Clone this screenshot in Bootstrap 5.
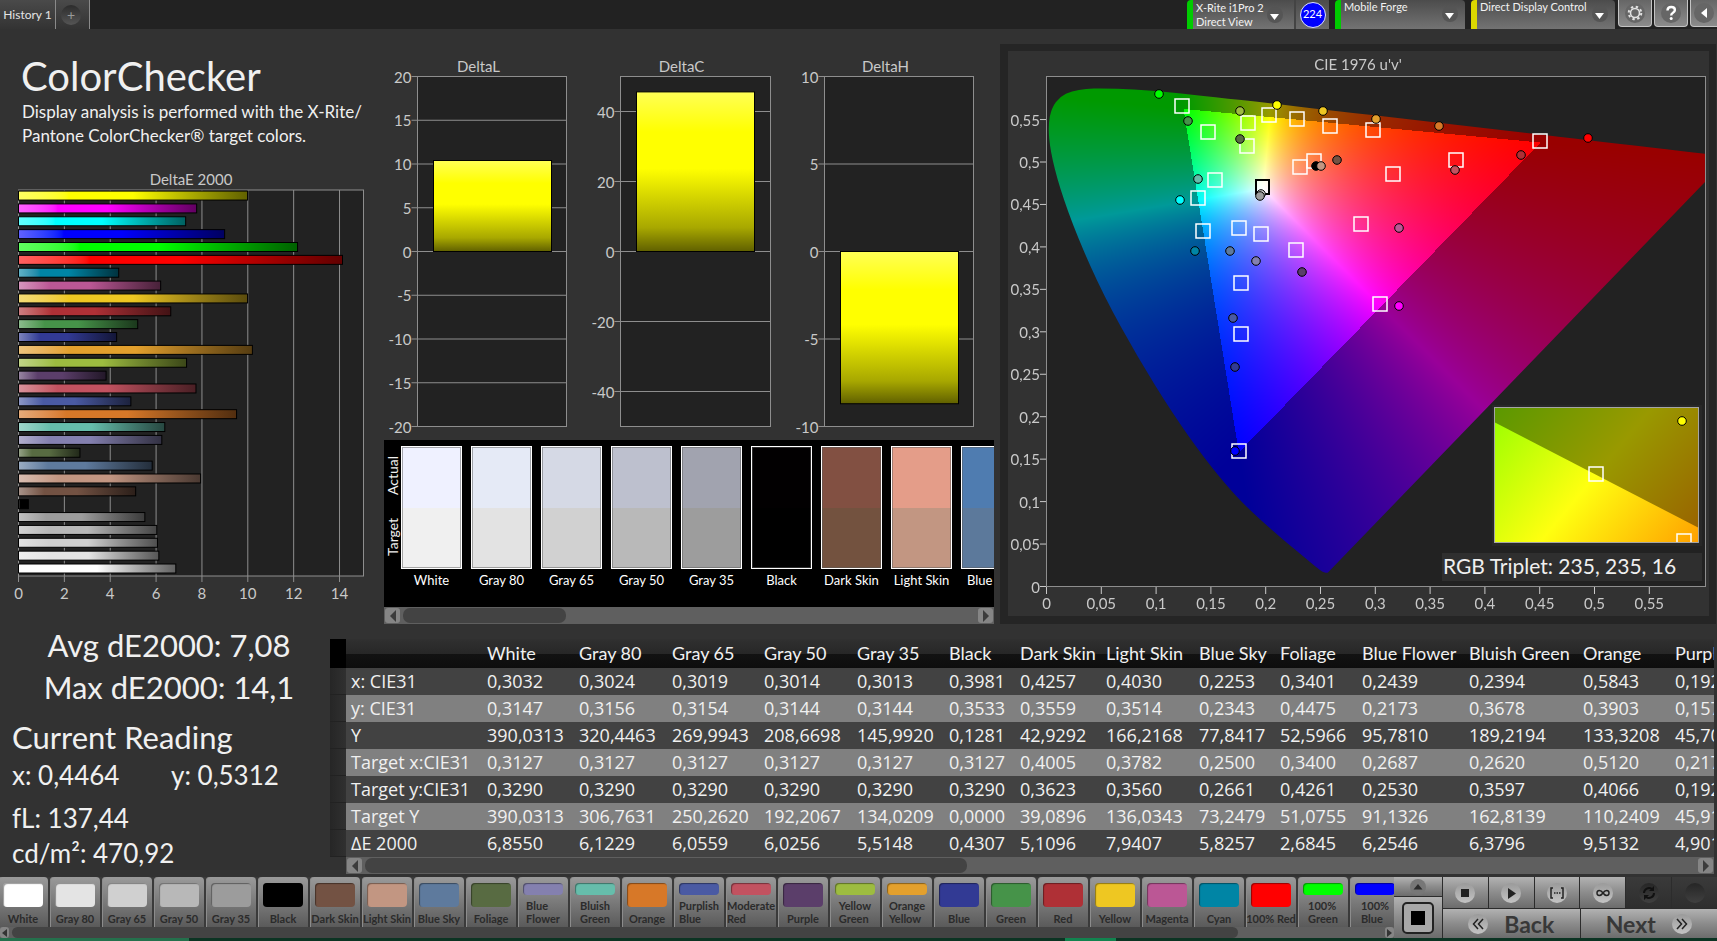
<!DOCTYPE html>
<html lang="en">
<head>
<meta charset="utf-8">
<meta name="viewport" content="width=device-width, initial-scale=1">
<title>ColorChecker</title>
<link href="https://cdn.jsdelivr.net/npm/bootstrap@5.3.0/dist/css/bootstrap.min.css" rel="stylesheet">
<style>
  body { background:#323232; color:#f0f0f0; font-family:Lato,"Open Sans",sans-serif; overflow-x:hidden; }
  button { font-family:inherit; }
  svg { display:block; }

  /* top bar */
  .topbar { height:29px; background:#222; overflow:hidden; }
  .tab-btn { border:0; border-right:1px solid #8a8a8a; background:linear-gradient(#4a4a4a,#333); color:#e4e4e4; font-size:12px; height:29px; }
  .tab-hist { width:56px; }
  .tab-add { width:34px; }
  .add-dot { width:20px; height:20px; border-radius:50%; background:linear-gradient(#2c2c2c,#555); color:#999; line-height:20px; font-size:14px; margin-left:5px; display:block; }
  .devices { gap:6px; }
  .dev { border:0; border-left:6px solid #0c0; height:29px; background:linear-gradient(#4c4c4c,#737373); color:#f2f2f2; font-size:11px; line-height:14px; text-align:left; white-space:nowrap; }
  .dev-yellow { border-left-color:#dcd800; }
  .dev-a { width:107px; border-radius:4px 0 0 0; padding:0 0 0 3px; }
  .dev-b { width:130px; border-radius:4px 4px 0 0; padding:0 0 0 3px; }
  .dev-c { width:144px; border-radius:4px 4px 0 0; padding:0 0 0 3px; }
  .dev-count { width:35px; height:29px; background:linear-gradient(#4c4c4c,#6c6c6c); border-left:2px solid #444; }
  .count-dot { width:26px; height:26px; border-radius:50%; background:#00f; border:1px solid #dfe3ff; color:#fff; font-size:11px; }
  .tools { gap:2px; margin:0 -7px 0 -3px; }
  .tool-btn { width:34px; height:27px; border:1px solid #c4c4c4; border-top:0; border-radius:0 0 4px 4px; background:linear-gradient(#666,#8c8c8c); }

  /* upper area */
  .board { display:grid; grid-template-columns:380fr 620fr 717fr; padding-top:15px; }
  .board > * { min-width:0; }
  .intro-block { padding:8px 0 0 22px; }
  .page-title { font-size:40px; line-height:48px; font-weight:400; margin-left:-1px; }
  .intro { font-size:17px; line-height:24px; }
  .chart-text text { font-size:15px; fill:#c9c9c9; }
  .chart-text .readout { font-size:21px; fill:#f0f0f0; }
  .stack { display:grid; }
  .stack > * { grid-area:1/1; width:100%; }
  .swatch-panel { margin:0 6px 0 4px; }
  .swatches { background:#000; height:167px; overflow:hidden; }
  .swatch-row { gap:9px; padding-top:6px; }
  .side-label { width:17px; font-size:14px; }
  .side-label span { writing-mode:vertical-rl; transform:rotate(180deg); height:62px; line-height:17px; text-align:center; }
  .swatch { flex:0 0 61px; }
  .swatch-chip { height:123px; border:1px solid #fff; outline:1px solid rgba(90,90,90,.5); outline-offset:-2px; }
  .swatch-name { font-size:13px; line-height:22px; text-align:center; white-space:nowrap; margin:0 -4px; color:#fff; }

  /* scroll bars */
  .sbar { height:17px; background:#5f5f5f; display:flex; align-items:center; padding:0 1px; }
  .sbar button { width:15px; height:15px; border:0; border-radius:3px; background:#858585; padding:0; display:grid; place-items:center; flex:none; }
  .sbar .track { flex:1; height:15px; margin:0 3px; }
  .sbar .thumb { height:15px; border-radius:7px; background:#434343; }
  .sbar-slim { height:11px; padding:0; }
  .sbar-slim button { width:9px; height:11px; }
  .sbar-slim .track, .sbar-slim .thumb { height:11px; }

  /* readings and table */
  .stats { flex:0 0 330px; padding-left:12px; }
  .stat-xl { font-size:31px; line-height:42px; }
  .stat-lg { font-size:26px; line-height:35px; }
  .stat-mid { padding-right:4px; }
  .readings { padding:15px 3px 0 0; }
  .data-wrap { overflow:hidden; }
  .data { table-layout:fixed; width:1500px; border-collapse:collapse; font-family:"Open Sans","Noto Sans",sans-serif; }
  .data th, .data td { padding:0 5px; height:27px; line-height:27px; font-size:18px; font-weight:400; white-space:nowrap; }
  .data thead th { height:29px; line-height:29px; font-family:Lato,sans-serif; background:linear-gradient(#303030,#272727 50%,#121212 52%,#0d0d0d); }
  .data thead th:first-child { background:#000; }
  .data tbody tr { background:#424242; }
  .data tbody tr:nth-child(even) { background:#808080; }
  .data tbody td:first-child { background:linear-gradient(90deg,#262626,#303030); box-shadow:inset 0 -1px #222; }

  /* bottom bar */
  .patches { overflow:hidden; background:#3a3a3a; height:50px; gap:2px; margin-left:-2px; }
  .patch { flex:0 0 50px; height:50px; border:0; border-radius:4px 4px 0 0; padding:6px 0 2px; background:linear-gradient(#9a9a9a,#5a5a5a); color:#2b2b2b; font-size:11px; line-height:13px; font-weight:700; box-shadow:1px 0 #8c8c8c inset; display:flex; flex-direction:column; align-items:center; justify-content:space-between; white-space:nowrap; text-align:left; }
  .patch i { display:block; width:40px; height:24px; border-radius:4px; box-shadow:inset 1px 1px 1px rgba(0,0,0,.4); }
  .patch.two i { height:12px; flex:none; }
  .ctl { flex:0 0 323px; background:#2c2c2c; gap:1px; }
  .ctl button { border:0; padding:0; background:linear-gradient(#b2b2b2,#8c8c8c 50%,#6c6c6c); color:#2e2e2e; }
  .ctl button.off { background:linear-gradient(#3a3a3a,#2e2e2e); }
  .ctl-side { flex:0 0 48px; }
  .ctl-up { height:19px; }
  .ctl-stop { height:41px; }
  .ctl-row { height:31px; flex:1; }
  .ctl-line { gap:1px; }
  .ctl .ctl-nav { height:29px; font-size:23px; line-height:28px; font-weight:700; flex:1; }
  .ctl .ctl-nav { color:#383838; }
  .disc { width:20px; height:20px; border-radius:50%; background:linear-gradient(#9a9a9a,#c4c4c4); display:grid; place-items:center; }
  .off .disc { background:linear-gradient(#262626,#404040); }
  .strip { height:3px; background:linear-gradient(90deg,#24704c 11%,#0c3423 11% 62%,#12834f 62% 65%,#0c3423 65%); }
</style>
<script src="https://cdn.jsdelivr.net/npm/bootstrap@5.3.0/dist/js/bootstrap.bundle.min.js"></script>
</head>
<body class="d-flex flex-column min-vh-100">

<header class="topbar d-flex align-items-start">
  <button type="button" class="tab-btn tab-hist p-0 text-nowrap">History 1</button>
  <button type="button" class="tab-btn tab-add p-0" aria-label="Add tab"><span class="add-dot">+</span></button>
  <div class="devices d-flex ms-auto">
    <div class="d-flex">
      <button type="button" class="dev dev-a d-flex align-items-center justify-content-between" aria-haspopup="true"><span>X-Rite i1Pro 2<br>Direct View</span><svg width="28" height="28" viewBox="0 0 28 28"><circle cx="9" cy="14" r="8" fill="#555"/><path d="M4 13h9l-4.500 6z" fill="#fff"/></svg></button>
      <div class="dev-count d-flex align-items-center justify-content-center"><span class="count-dot d-flex align-items-center justify-content-center">224</span></div>
    </div>
    <button type="button" class="dev dev-b d-flex align-items-start justify-content-between" aria-haspopup="true"><span>Mobile Forge</span><svg width="28" height="28" viewBox="0 0 28 28"><circle cx="13" cy="14" r="8" fill="#555"/><path d="M8 13h9l-4.500 6z" fill="#fff"/></svg></button>
    <button type="button" class="dev dev-c dev-yellow d-flex align-items-start justify-content-between" aria-haspopup="true"><span>Direct Display Control</span><svg width="24" height="28" viewBox="0 0 24 28"><circle cx="9" cy="14" r="8" fill="#555"/><path d="M4 13h9l-4.500 6z" fill="#fff"/></svg></button>
    <div class="tools d-flex">
      <button type="button" class="tool-btn p-0" aria-label="Settings"><svg width="32" height="26" viewBox="0 0 32 26"><circle cx="16" cy="13" r="10" fill="#666"/><circle cx="16" cy="13" r="4.500" fill="none" stroke="#e2e2e2" stroke-width="1.600"/><circle cx="16" cy="13" r="6.300" fill="none" stroke="#e2e2e2" stroke-width="2" stroke-dasharray="2.400 2.548"/></svg></button>
      <button type="button" class="tool-btn p-0" aria-label="Help"><svg width="32" height="26" viewBox="0 0 32 26"><circle cx="16" cy="13" r="10" fill="#666"/><path d="M12.500 10.500q0-3.500 3.700-3.500t3.700 3q0 1.600-1.900 2.700T16.200 15.500" fill="none" stroke="#fff" stroke-width="2.400"/><circle cx="16.200" cy="18.500" r="1.500" fill="#fff"/></svg></button>
      <button type="button" class="tool-btn p-0" aria-label="Collapse"><svg width="32" height="26" viewBox="0 0 32 26"><circle cx="13" cy="13" r="10" fill="#666"/><path d="M16 8v10l-6-5z" fill="#fff"/></svg></button>
    </div>
  </div>
</header>

<main class="board">
  <section>
    <div class="intro-block">
      <h1 class="page-title mb-0">ColorChecker</h1>
      <p class="intro mb-0 text-nowrap">Display analysis is performed with the X-Rite/<br>Pantone ColorChecker® target colors.</p>
    </div>
    <svg id="deltaE" class="chart-text w-100" viewBox="0 148 380 460" role="img" aria-label="DeltaE 2000 bar chart"></svg>
  </section>

  <section>
    <svg id="deltas" class="chart-text w-100" viewBox="380 44 620 396" role="img" aria-label="DeltaL, DeltaC and DeltaH"></svg>
    <div class="swatch-panel">
      <div class="swatches d-flex">
        <div class="side-label d-flex flex-column pt-1 flex-shrink-0"><span>Actual</span><span>Target</span></div>
        <div class="swatch-row d-flex overflow-hidden flex-grow-1" id="swatches"></div>
      </div>
      <div class="sbar"><button type="button" aria-label="Scroll left"><svg width="6" height="12"><path d="M6 0v12L0 6z" fill="#3b3b3b"/></svg></button><div class="track"><div class="thumb" style="width:28.500%"></div></div><button type="button" aria-label="Scroll right"><svg width="6" height="12"><path d="M0 0v12l6-6z" fill="#3b3b3b"/></svg></button></div>
    </div>
  </section>

  <section class="stack">
    <svg id="cieBase" viewBox="0 44 717 580"><rect y="44" width="716" height="580" fill="#252525"/><rect x="8" y="51" width="701" height="565" fill="#323232"/><rect x="46" y="76" width="660" height="511" fill="#222"/></svg>
    <canvas id="cieFill" width="717" height="580"></canvas>
    <svg id="cie" class="chart-text" viewBox="0 44 717 580" role="img" aria-label="CIE 1976 chromaticity diagram"></svg>
  </section>
</main>

<section class="d-flex">
  <div class="stats">
    <div class="stat-xl stat-mid text-center">Avg dE2000: 7,08</div>
    <div class="stat-xl stat-mid text-center">Max dE2000: 14,1</div>
    <div class="stat-xl pt-2">Current Reading</div>
    <div class="stat-lg row g-0 pb-2"><span class="col-6">x: 0,4464</span><span class="col-6">y: 0,5312</span></div>
    <div class="stat-lg">fL: 137,44</div>
    <div class="stat-lg">cd/m²: 470,92</div>
  </div>
  <div class="readings flex-grow-1 overflow-hidden">
    <div class="data-wrap"><table class="data" id="data"></table></div>
    <div class="sbar ms-3"><button type="button" aria-label="Scroll left"><svg width="6" height="12"><path d="M6 0v12L0 6z" fill="#3b3b3b"/></svg></button><div class="track"><div class="thumb" style="width:45.300%"></div></div><button type="button" aria-label="Scroll right"><svg width="6" height="12"><path d="M0 0v12l6-6z" fill="#3b3b3b"/></svg></button></div>
  </div>
</section>

<footer class="mt-auto">
  <div class="d-flex">
    <div class="flex-grow-1 overflow-hidden">
      <div class="patches d-flex" id="patches"></div>
      <div class="sbar sbar-slim"><button type="button" aria-label="Scroll left"><svg width="5" height="8"><path d="M5 0v8L0 4z" fill="#333"/></svg></button><div class="track"><div class="thumb" style="width:89.500%"></div></div><button type="button" aria-label="Scroll right"><svg width="5" height="8"><path d="M0 0v8l5-4z" fill="#333"/></svg></button></div>
    </div>
    <div class="ctl d-flex">
      <div class="ctl-side d-flex flex-column">
        <button type="button" class="ctl-up mb-auto" aria-label="Expand"><svg width="16" height="16" class="mx-auto"><circle cx="8" cy="8" r="8" fill="#777"/><path d="M3.500 10.500h9L8 5z" fill="#2b2b2b"/></svg></button>
        <button type="button" class="ctl-stop" aria-label="Stop window"><svg width="34" height="34" class="mx-auto"><rect x="2" y="2" width="30" height="30" rx="4" fill="#a8a8a8" stroke="#222" stroke-width="2"/><rect x="10" y="10" width="14" height="14" fill="#000"/></svg></button>
      </div>
      <div class="flex-grow-1 d-flex flex-column">
        <div class="ctl-line d-flex mb-auto" id="transport"></div>
        <div class="ctl-line d-flex">
          <button type="button" class="ctl-nav d-flex align-items-center justify-content-center gap-3"><span class="disc"><svg width="12" height="12"><path d="M6 1L1.500 6 6 11M11 1L6.500 6 11 11" fill="none" stroke="#222" stroke-width="1.500"/></svg></span>Back</button>
          <button type="button" class="ctl-nav d-flex align-items-center justify-content-center gap-3">Next<span class="disc"><svg width="12" height="12"><path d="M1 1l4.500 5L1 11M6 1l4.500 5L6 11" fill="none" stroke="#222" stroke-width="1.500"/></svg></span></button>
        </div>
      </div>
    </div>
  </div>
  <div class="strip"></div>
</footer>

<script>
const $ = id => document.getElementById(id);
const line = (x1,y1,x2,y2,c='#8e8e8e') => `<path d="M${x1} ${y1}L${x2} ${y2}" stroke="${c}"/>`;
const label = (x,y,t,a='middle',cls='') => `<text x="${x}" y="${y}" text-anchor="${a}" class="${cls}">${t}</text>`;
const comma = v => String(+v.toFixed(2)).replace('.', ',');

/* patches: name, target colour */
const patches = [['White','#fff'],['Gray 80','#e4e4e4'],['Gray 65','#d0d0d0'],['Gray 50','#b8b8b8'],['Gray 35','#9c9c9c'],['Black','#000'],
 ['Dark Skin','#735243'],['Light Skin','#c29682'],['Blue Sky','#5e7a9d'],['Foliage','#586b42'],['Blue<br>Flower','#8480af'],['Bluish<br>Green','#66bdab'],
 ['Orange','#d77828'],['Purplish<br>Blue','#4a5aa3'],['Moderate<br>Red','#c25260'],['Purple','#5b3e6a'],['Yellow<br>Green','#9dbc40'],['Orange<br>Yellow','#e3a02d'],
 ['Blue','#323a94'],['Green','#469349'],['Red','#af3036'],['Yellow','#eec722'],['Magenta','#bb5795'],['Cyan','#0085a5'],
 ['100% Red','#f00'],['100%<br>Green','#0f0'],['100%<br>Blue','#00f'],['100%<br>Cyan','#0ff'],['100%<br>Magenta','#f0f'],['100%<br>Yellow','#ff0']];
$('patches').innerHTML = patches.slice(0,27).map(([n,c]) =>
  `<button type="button" class="patch ${n.includes('<br>')?'two':''}"><i style="background:${c}"></i><span>${n}</span></button>`).join('');

/* DeltaE 2000 */
(() => {
  const v = [6.86,6.12,6.06,6.03,5.51,.43,5.11,7.94,5.83,2.68,6.25,6.38,9.51,4.9,7.74,3.82,7.33,10.2,4.28,5.2,6.64,9.99,6.2,4.37,14.13,12.17,8.99,7.29,7.77,9.99];
  const X = n => 18.5 + n*22.93;
  let s = `<rect x="18.5" y="190" width="345" height="386" fill="#222" stroke="#8e8e8e"/>`, d = '';
  for (let n=0;n<=14;n+=2) s += line(X(n),190,X(n),582) + label(X(n),599,n);
  v.forEach((n,i) => {
    const c = patches[i][1], y = 568.5 - i*12.86;
    d += `<linearGradient id="g${i}"><stop stop-color="color-mix(in srgb, ${c} 62%, #fff)"/><stop offset=".22" stop-color="${c}"/><stop offset=".5" stop-color="${c}"/><stop offset="1" stop-color="color-mix(in srgb, ${c} 38%, #000)"/></linearGradient>`;
    s += `<rect x="18.5" y="${y-4.5}" width="${n*22.93}" height="9" fill="url(#g${i})" stroke="#000"/>`;
  });
  $('deltaE').innerHTML = `<defs>${d}</defs>` + s + label(191,185,'DeltaE 2000');
})();

/* DeltaL / DeltaC / DeltaH */
(() => {
  let s = `<defs><linearGradient id="gy" x2="0" y2="1"><stop stop-color="#ffff55"/><stop offset=".25" stop-color="#ff0"/><stop offset=".48" stop-color="#ff0"/><stop offset=".85" stop-color="#a8a800"/><stop offset="1" stop-color="#606000"/></linearGradient></defs>`;
  [['DeltaL',417.5,149,20,5,10.4],['DeltaC',620.5,150,50,20,45.6],['DeltaH',824.5,149,10,5,-8.7]].forEach(([t,x,w,max,step,val]) => {
    const k = 175/max, Y = v => 251.5 - v*k, top = Math.floor(max/step)*step;
    s += `<rect x="${x}" y="76.5" width="${w}" height="350" fill="#222" stroke="#8e8e8e"/>` + label(x+61,72,t);
    for (let v=-top; v<=top; v+=step) s += line(x-6,Y(v),x+w,Y(v)) + label(x-6,Y(v)+6,v,'end');
    s += `<rect x="${x+16}" y="${Math.min(Y(0),Y(val))}" width="118" height="${Math.abs(val)*k}" fill="url(#gy)" stroke="#000"/>`;
  });
  $('deltas').innerHTML = s;
})();

/* actual / target swatches */
$('swatches').innerHTML = [['White','#eff1ff','#f0f0f0'],['Gray 80','#e5eaf6','#e3e3e3'],['Gray 65','#d5d9e5','#d1d1d1'],['Gray 50','#bdc0ce','#b9b9b9'],['Gray 35','#a1a3af','#9d9d9d'],['Black','#020001','#000'],['Dark Skin','#825042','#73523f'],['Light Skin','#e49d89','#c29682'],['Blue Sky','#4f7cb0','#5c799b']]
  .map(([n,a,t]) => `<div class="swatch"><div class="swatch-chip" style="background:linear-gradient(${a} 50%,${t} 50%)"></div><div class="swatch-name">${n}</div></div>`).join('');

/* CIE 1976 u'v' */
(() => {
  const X = u => 46.5 + u*1096, Y = v => 586.5 - v*849;
  const xy = [.1741,.005,.1733,.0048,.1714,.0051,.1689,.0069,.1644,.0109,.1566,.0177,.144,.0297,.1355,.0399,.1241,.0578,.1096,.0868,.0913,.1327,.0687,.2007,.0454,.295,.0235,.4127,.0082,.5384,.0039,.6548,.0139,.7502,.0389,.812,.0743,.8338,.1142,.8262,.1547,.8059,.2296,.7543,.3016,.6923,.3731,.6245,.4441,.5547,.5125,.4866,.5752,.4242,.627,.3725,.6658,.334,.6915,.3083,.719,.2809,.7347,.2653];
  const W = 717, H = 580, off = document.createElement('canvas'); off.width = W; off.height = H;
  const oc = off.getContext('2d'), im = oc.createImageData(W,H);
  for (let j=0;j<H;j++) for (let i=0;i<W;i++) {
    const u = (i+.5-46.5)/1096, v = (586.5-(j+44.5))/849;
    if (v <= .001) continue;
    const x = 9*u/(6*u-16*v+12), y = 4*v/(6*u-16*v+12), x1 = x/y, z1 = (1-x-y)/y;
    const c = [3.2406*x1-1.5372-.4986*z1, -.9689*x1+1.8758+.0415*z1, .0557*x1-.204+1.057*z1];
    const m = Math.max(...c), k = Math.min(...c) < 0 ? 153 : 255, p = (j*W+i)*4;
    c.forEach((q,n) => im.data[p+n] = k*Math.max(0,q/m));
    im.data[p+3] = 255;
  }
  oc.putImageData(im,0,0);
  const cx = $('cieFill').getContext('2d');
  cx.beginPath(); cx.rect(47,33,658,509); cx.clip();
  cx.beginPath();
  const pts = [];
  for (let n=0;n<xy.length;n+=2) { const d = -2*xy[n]+12*xy[n+1]+3; pts.push([X(4*xy[n]/d), Y(9*xy[n+1]/d)-44]); }
  cx.moveTo(...pts[0]);
  for (let n=1;n<pts.length-1;n++) cx.quadraticCurveTo(...pts[n],(pts[n][0]+pts[n+1][0])/2,(pts[n][1]+pts[n+1][1])/2);
  cx.lineTo(...pts[pts.length-1]); cx.closePath(); cx.clip();
  cx.drawImage(off,0,0);

  let s = `<rect x="46.5" y="76.5" width="659" height="510" fill="none" stroke="#8e8e8e"/>` + label(358,70,"CIE 1976 u'v'");
  for (let n=0;n<12;n++) {
    const v = n*.05;
    s += line(X(v),587,X(v),594,'#c9c9c9') + label(X(v),609,comma(v)) + line(40,Y(v),46,Y(v),'#c9c9c9') + label(40,Y(v)+6,comma(v),'end');
  }
  const sq = (x,y,c='#fff') => `<rect x="${x-7}" y="${y-7}" width="14" height="14" fill="none" stroke="${c}" stroke-width="1.500"/>`;
  const dot = (x,y,c) => `<circle cx="${x}" cy="${y}" r="4.300" fill="${c}" stroke="#000"/>`;
  [[182,106],[208,132],[248,123],[269,115],[297,119],[330,126],[373,130],[247,146],[540,141],[456,160],[393,174],[314,161],[300,167],[361,224],[215,180],[198,198],[203,231],[239,228],[261,234],[296,250],[241,283],[380,304],[241,334],[239,451]].forEach(p => s += sq(...p));
  s += `<rect x="256" y="180" width="13" height="14" fill="#fff" fill-opacity=".6" stroke="#000" stroke-width="2"/>`;
  [[159,94,'#0f0'],[188,121,'#469349'],[240,111,'#9dbc40'],[240,139,'#586b42'],[277,105,'#ff0'],[323,111,'#eec722'],[376,119,'#e3a02d'],[439,126,'#d77828'],[588,138,'#f00'],[521,155,'#af3036'],[455,170,'#c25260'],[337,160,'#735243'],[316,166,'#000'],[321,166,'#c29682'],[198,179,'#66bdab'],[180,200,'#0ff'],[195,251,'#0085a5'],[230,251,'#5e7a9d'],[256,261,'#8480af'],[302,272,'#5b3e6a'],[399,228,'#bb5795'],[399,306,'#f0f'],[233,318,'#4a5aa3'],[235,367,'#323a94'],[235,451,'#00f'],[261,194,'#ccc'],[260,196,'#9c9c9c']].forEach(p => s += dot(...p));
  /* magnified view of the selected patch */
  const st = (a,b,c) => `<stop stop-color="${a}"/><stop offset=".5" stop-color="${b}"/><stop offset="1" stop-color="${c}"/>`;
  const gv = 'gradientUnits="userSpaceOnUse" x1="494" y1="407" x2="681" y2="563"';
  s += `<defs><linearGradient id="zi" ${gv}>${st('#96ff00','#ffff10','#ffa000')}</linearGradient><linearGradient id="zo" ${gv}>${st('#5a9900','#999900','#996000')}</linearGradient><clipPath id="zc"><rect x="494" y="407" width="205" height="136"/></clipPath></defs>
   <rect x="492" y="405" width="210" height="141" fill="#282828"/><g clip-path="url(#zc)"><rect x="494" y="407" width="205" height="136" fill="url(#zo)"/><path d="M494 422L699 528V543H494z" fill="url(#zi)"/>${sq(596,474)}${sq(684,541)}${dot(682,421,'#ff0')}</g>
   <rect x="494.5" y="407.5" width="204" height="135" fill="none" stroke="#a5a5a5"/>
   <rect x="442" y="553" width="260" height="28" fill="#2f2f2f"/>` + label(443,574,'RGB Triplet: 235, 235, 16','start','readout');
  $('cie').innerHTML = s;
})();

/* readings table */
(() => {
  const w = [16,136,92,93,92,93,92,71,86,93,81,82,107,114,92,160];
  const rows = `|White|Gray 80|Gray 65|Gray 50|Gray 35|Black|Dark Skin|Light Skin|Blue Sky|Foliage|Blue Flower|Bluish Green|Orange|Purplish Blue
x: CIE31|0,3032|0,3024|0,3019|0,3014|0,3013|0,3981|0,4257|0,4030|0,2253|0,3401|0,2439|0,2394|0,5843|0,1925
y: CIE31|0,3147|0,3156|0,3154|0,3144|0,3144|0,3533|0,3559|0,3514|0,2343|0,4475|0,2173|0,3678|0,3903|0,1571
Y|390,0313|320,4463|269,9943|208,6698|145,9920|0,1281|42,9292|166,2168|77,8417|52,5966|95,7810|189,2194|133,3208|45,7012
Target x:CIE31|0,3127|0,3127|0,3127|0,3127|0,3127|0,3127|0,4005|0,3782|0,2500|0,3400|0,2687|0,2620|0,5120|0,2170
Target y:CIE31|0,3290|0,3290|0,3290|0,3290|0,3290|0,3290|0,3623|0,3560|0,2661|0,4261|0,2530|0,3597|0,4066|0,1920
Target Y|390,0313|306,7631|250,2620|192,2067|134,0209|0,0000|39,0896|136,0343|73,2479|51,0755|91,1326|162,8139|110,2409|45,9100
ΔE 2000|6,8550|6,1229|6,0559|6,0256|5,5148|0,4307|5,1096|7,9407|5,8257|2,6845|6,2546|6,3796|9,5132|4,9010`.split('\n').map(r => r.split('|'));
  $('data').innerHTML = '<colgroup>' + w.map(n => `<col style="width:${n}px">`).join('') + '</colgroup><thead><tr><th></th>' +
    rows[0].map(c => `<th scope="col">${c}</th>`).join('') + '</tr></thead><tbody>' +
    rows.slice(1).map(r => `<tr><td></td><th scope="row">${r[0]}</th>` + r.slice(1).map(c => `<td>${c}</td>`).join('') + '</tr>').join('') + '</tbody>';
})();

/* transport buttons */
$('transport').innerHTML = [
  ['Stop','<rect x="5" y="5" width="8" height="8" fill="#222"/>'],
  ['Play','<path d="M6 4v11l8-5.500z" fill="#222"/>'],
  ['Range','<path d="M5 4H3v10h2M13 4h2v10h-2M6 9h1.500M8.500 9H10M11 9h1.500" fill="none" stroke="#222" stroke-width="1.500"/>'],
  ['Loop','<path d="M9 9C7 6 3 5.500 3 9s4 3 6 0 6-3.500 6 0-4 3-6 0z" fill="none" stroke="#222" stroke-width="1.500"/>'],
  ['Refresh','<path d="M4 9a5 5 0 0 1 8-4M14 9a5 5 0 0 1-8 4" fill="none" stroke="#111" stroke-width="2"/><path d="M14 2v5H9zM4 16v-5h5z" fill="#111"/>',1],
  ['Record','',1]
].map(([n,p,o]) => `<button type="button" class="ctl-row d-flex align-items-center justify-content-center ${o?'off':''}" aria-label="${n}"><span class="disc"><svg width="18" height="18">${p}</svg></span></button>`).join('');
</script>
</body>
</html>
